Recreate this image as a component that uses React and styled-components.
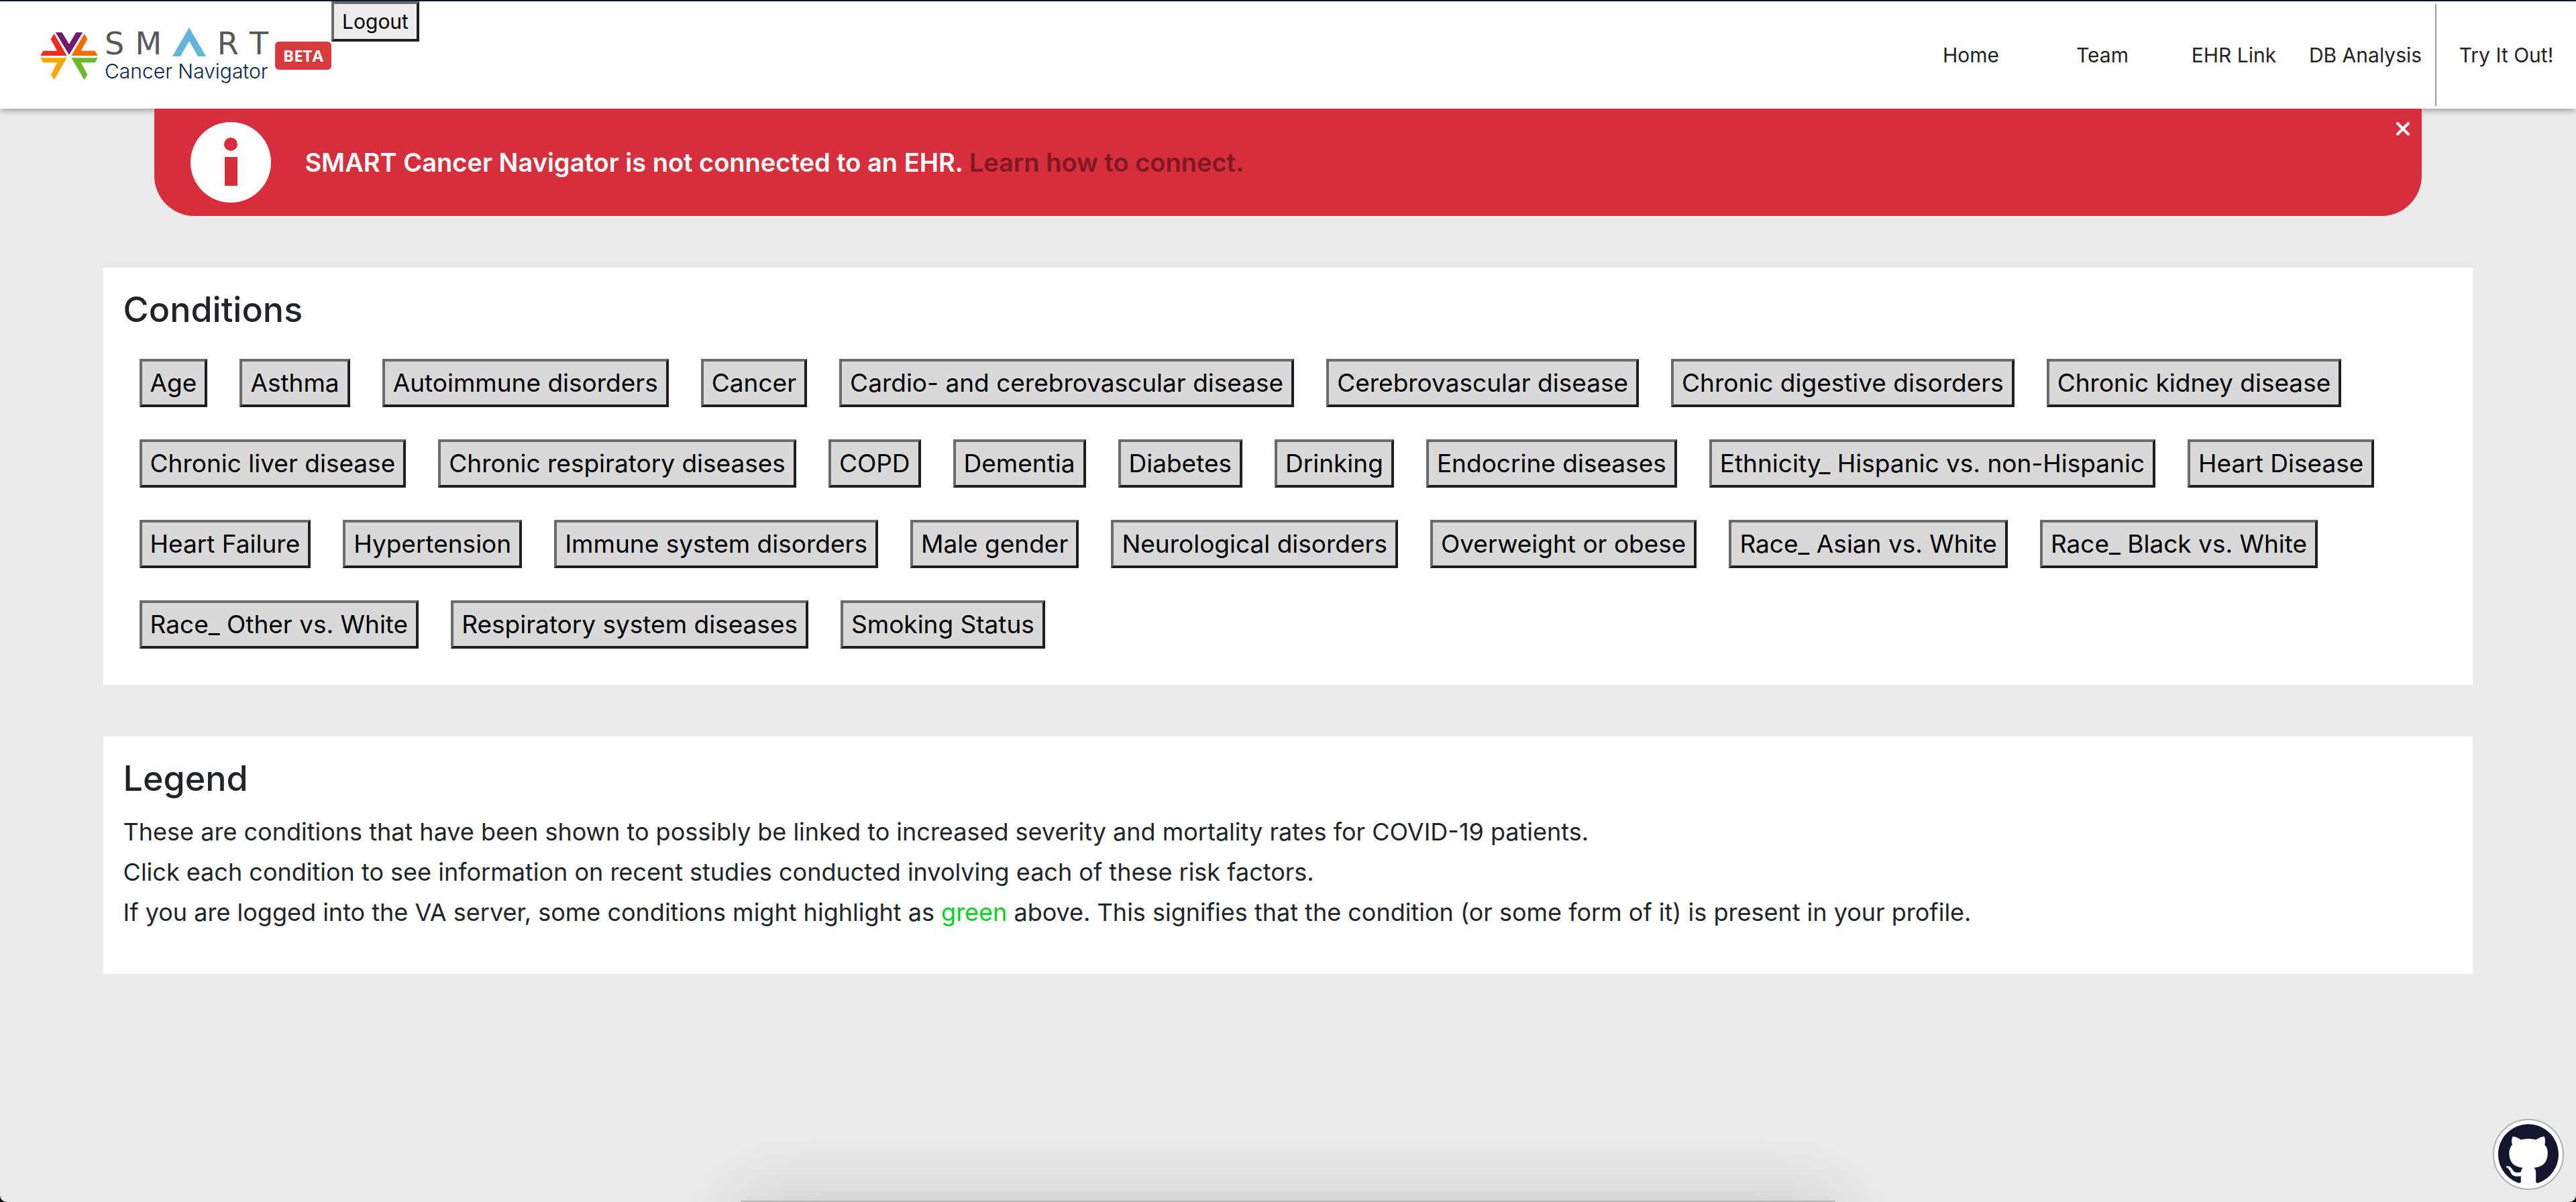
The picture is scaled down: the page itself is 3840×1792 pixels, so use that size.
import React from "react";
import styled, { createGlobalStyle } from "styled-components";

const GlobalStyle = createGlobalStyle`
  *, *::before, *::after { box-sizing: border-box; }
  html { background: #0a0d14; }
  body {
    margin: 0;
    font-family: Inter, "Liberation Sans", sans-serif;
    font-size: 36px;
    line-height: 60px;
    color: #212529;
  }
`;

const Page = styled.div`
  min-height: 100vh;
  background: #ebebeb;
  border-top: 2px solid #141f38;
  border-radius: 0 0 10px 10px;
`;

const Header = styled.header`
  display: flex;
  align-items: flex-start;
  height: 160px;
  background: #fff;
  box-shadow: 0 0 12px rgba(0, 0, 0, 0.5);
`;

const Brand = styled.a`
  display: flex;
  align-items: flex-start;
  gap: 10px;
  padding: 38px 0 0 60px;
  color: inherit;
  text-decoration: none;
`;

const Mark = styled.svg`
  width: 86px;
  height: 72px;
  margin-top: 8px;
`;

const Wordmark = styled.span`
  display: flex;
  flex-direction: column;
  width: 244px;
`;

const SmartLine = styled.span`
  display: flex;
  justify-content: space-between;
  align-items: flex-end;
  height: 46px;
  font-family: "DejaVu Sans", sans-serif;
  font-size: 46px;
  line-height: 42px;
  color: #58585b;
`;

const Peak = styled.svg`
  width: 50px;
  height: 46px;
`;

const ProductLine = styled.span`
  font-size: 30px;
  font-weight: 300;
  line-height: 40px;
  color: #04254a;
  white-space: nowrap;
`;

const Beta = styled.span`
  margin-top: 22px;
  padding: 0 12px;
  border-radius: 6px;
  background: #d73a3d;
  color: #fff;
  font-family: "Open Sans", sans-serif;
  font-size: 24px;
  font-weight: 700;
  line-height: 42px;
`;

const BevelButton = styled.button`
  padding: 2px 12px;
  border: 4px solid;
  border-color: #6b6b6b #1f1f1f #1f1f1f #6b6b6b;
  background: ${(p) => (p.$small ? "#ececec" : "#d9d9d9")};
  color: #000;
  font-family: inherit;
  font-size: ${(p) => (p.$small ? "30px" : "37px")};
  line-height: ${(p) => (p.$small ? "48px" : "60px")};
  white-space: nowrap;
`;

const Nav = styled.nav`
  display: flex;
  align-items: center;
  height: 100%;
  margin-left: auto;
  font-size: 30px;
`;

const NavLink = styled.a`
  width: 196px;
  color: #242424;
  text-align: center;
  text-decoration: none;
  white-space: nowrap;
`;

const TryLink = styled(NavLink)`
  display: flex;
  align-items: center;
  justify-content: center;
  width: 210px;
  height: 152px;
  margin-left: 6px;
  border-left: 2px solid #999;
`;

const Banner = styled.section`
  position: relative;
  display: flex;
  align-items: center;
  gap: 50px;
  height: 160px;
  margin: 0 6%;
  padding: 0 54px;
  border-radius: 0 0 60px 60px;
  background: #d72e3d;
  color: #fff;
  font-size: 38px;
  font-weight: 600;
`;

const InfoIcon = styled.svg`
  width: 120px;
  height: 120px;
`;

const BannerLink = styled.a`
  color: #7f1822;
  text-decoration: none;
`;

const Close = styled.button`
  position: absolute;
  top: 14px;
  right: 12px;
  display: flex;
  padding: 6px;
  border: 0;
  background: none;
  color: #fff;
`;

const Panel = styled.section`
  margin: 2% 4%;
  padding: 30px;
  background: #fff;
`;

const Heading = styled.h2`
  margin: 0 0 16px;
  font-size: 52px;
  font-weight: 500;
  line-height: 66px;
`;

const Chips = styled.div`
  display: flex;
  flex-wrap: wrap;
  gap: 48px;
  padding: 24px;
`;

const LegendText = styled.p`
  margin: 0 0 32px;
`;

const Green = styled.span`
  color: #00d420;
`;

const GithubLink = styled.a`
  position: fixed;
  right: 18px;
  bottom: 18px;
  display: flex;
  padding: 6px;
  border: 2px solid #b0b0b0;
  border-radius: 50%;
  background: #fff;
  color: #14152e;
`;

const DockShade = styled.div`
  position: fixed;
  left: 0;
  right: 0;
  bottom: 0;
  height: 130px;
  overflow: hidden;
  pointer-events: none;
  &::after {
    content: "";
    position: absolute;
    top: 128px;
    left: 1104px;
    right: 1104px;
    height: 200px;
    background: #b4b4b4;
    box-shadow: 0 0 110px rgba(0, 0, 0, 0.16);
  }
`;

const conditions = [
  "Age", "Asthma", "Autoimmune disorders", "Cancer", "Cardio- and cerebrovascular disease",
  "Cerebrovascular disease", "Chronic digestive disorders", "Chronic kidney disease",
  "Chronic liver disease", "Chronic respiratory diseases", "COPD", "Dementia", "Diabetes",
  "Drinking", "Endocrine diseases", "Ethnicity_ Hispanic vs. non-Hispanic", "Heart Disease",
  "Heart Failure", "Hypertension", "Immune system disorders", "Male gender",
  "Neurological disorders", "Overweight or obese", "Race_ Asian vs. White",
  "Race_ Black vs. White", "Race_ Other vs. White", "Respiratory system diseases",
  "Smoking Status",
];

function Logo() {
  return (
    <Brand href="#home">
      <Mark viewBox="59 83 258 216" aria-hidden="true">
        <path fill="#6f1d6b" d="M127 84h29l32 52 31-52h30l-61 100z" />
        <path fill="#ee2c24" d="M121 90l57 98H60l12-22h62l-28-52z" />
        <path fill="#f76b00" d="M256 90l14 24-29 52h63l12 22H198z" />
        <path fill="#faa500" d="M60 198h118l-57 98-14-23 28-54H72z" />
        <path fill="#6ab82c" d="M198 198h118l-12 21h-63l29 54-14 23z" />
      </Mark>
      <Wordmark>
        <SmartLine>
          <span>S</span>
          <span>M</span>
          <Peak viewBox="0 0 50 46" aria-hidden="true">
            <path fill="#64b5dc" d="M25 1l25 43H38L25 21 12 44H0z" />
          </Peak>
          <span>R</span>
          <span>T</span>
        </SmartLine>
        <ProductLine>Cancer Navigator</ProductLine>
      </Wordmark>
      <Beta>BETA</Beta>
    </Brand>
  );
}

export default function App() {
  return (
    <Page>
      <GlobalStyle />
      <Header>
        <Logo />
        <BevelButton $small type="button">Logout</BevelButton>
        <Nav>
          <NavLink href="#home">Home</NavLink>
          <NavLink href="#team">Team</NavLink>
          <NavLink href="#ehr">EHR Link</NavLink>
          <NavLink href="#db">DB Analysis</NavLink>
          <TryLink href="#try">Try It Out!</TryLink>
        </Nav>
      </Header>
      <Banner>
        <InfoIcon viewBox="0 0 120 120" aria-hidden="true">
          <circle cx="60" cy="60" r="60" fill="#fff" />
          <circle cx="60" cy="33" r="10" fill="#d72e3d" />
          <path fill="#d72e3d" d="M51 52h19v43H51z" />
        </InfoIcon>
        <span>
          SMART Cancer Navigator is not connected to an EHR.{" "}
          <BannerLink href="#connect">Learn how to connect.</BannerLink>
        </span>
        <Close type="button" aria-label="Close">
          <svg width="20" height="20" viewBox="0 0 20 20" stroke="currentColor" strokeWidth="4" strokeLinecap="round">
            <path d="M2 2l16 16M18 2L2 18" />
          </svg>
        </Close>
      </Banner>
      <main>
        <Panel>
          <Heading>Conditions</Heading>
          <Chips>
            {conditions.map((name) => (
              <BevelButton key={name} type="button">{name}</BevelButton>
            ))}
          </Chips>
        </Panel>
        <Panel>
          <Heading>Legend</Heading>
          <LegendText>
            These are conditions that have been shown to possibly be linked to increased severity and mortality rates for COVID-19 patients.
            <br />
            Click each condition to see information on recent studies conducted involving each of these risk factors.
            <br />
            If you are logged into the VA server, some conditions might highlight as <Green>green</Green> above. This signifies that the condition (or some form of it) is present in your profile.
          </LegendText>
        </Panel>
      </main>
      <DockShade />
      <GithubLink href="#github" aria-label="GitHub">
        <svg width="90" height="90" viewBox="0 0 16 16" fill="currentColor" aria-hidden="true">
          <path d="M8 0C3.58 0 0 3.58 0 8c0 3.54 2.29 6.53 5.47 7.59.4.07.55-.17.55-.38 0-.19-.01-.82-.01-1.49-2.01.37-2.53-.49-2.69-.94-.09-.23-.48-.94-.82-1.13-.28-.15-.68-.52-.01-.53.63-.01 1.08.58 1.23.82.72 1.21 1.87.87 2.33.66.07-.52.28-.87.51-1.07-1.78-.2-3.64-.89-3.64-3.95 0-.87.31-1.59.82-2.15-.08-.2-.36-1.02.08-2.12 0 0 .67-.21 2.2.82.64-.18 1.32-.27 2-.27.68 0 1.36.09 2 .27 1.53-1.04 2.2-.82 2.2-.82.44 1.1.16 1.92.08 2.12.51.56.82 1.27.82 2.15 0 3.07-1.87 3.75-3.65 3.95.29.25.54.73.54 1.48 0 1.07-.01 1.93-.01 2.2 0 .21.15.46.55.38A8.013 8.013 0 0016 8c0-4.42-3.58-8-8-8z" />
        </svg>
      </GithubLink>
    </Page>
  );
}
